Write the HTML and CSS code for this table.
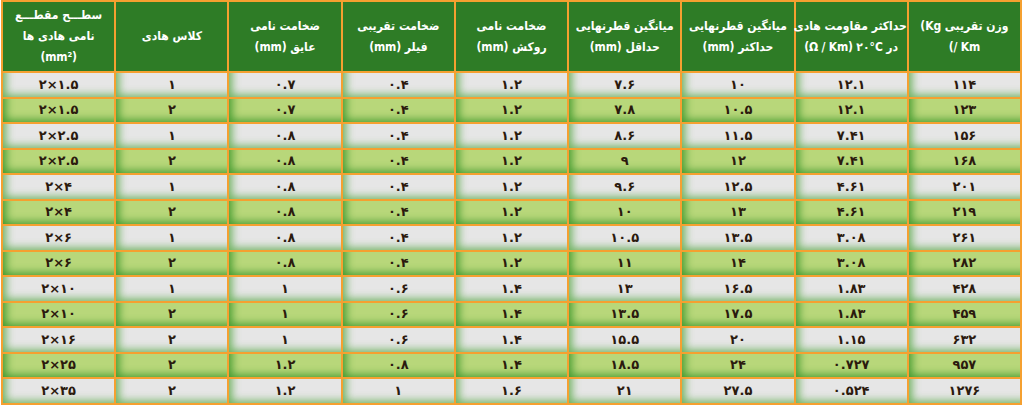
FILE: index.html
```html
<!DOCTYPE html>
<html lang="fa" dir="rtl">
<head>
<meta charset="utf-8">
<title>جدول مشخصات کابل</title>
<link rel="stylesheet" href="styles.css">
</head>
<body>
<table class="spec">
<thead>
<tr>
<th>وزن تقریبی <span class="ltr">(Kg</span><br><span class="ltr">(/ Km</span></th>
<th>حداکثر مقاومت هادی<br>در <span class="ltr">۲۰°C</span> <span class="ltr">(Ω / Km)</span></th>
<th>میانگین قطرنهایی<br>حداکثر <span class="ltr">(mm)</span></th>
<th>میانگین قطرنهایی<br>حداقل <span class="ltr">(mm)</span></th>
<th>ضخامت نامی<br>روکش <span class="ltr">(mm)</span></th>
<th>ضخامت تقریبی<br>فیلر <span class="ltr">(mm)</span></th>
<th>ضخامت نامی<br>عایق <span class="ltr">(mm)</span></th>
<th>کلاس هادی</th>
<th>سطـــح مقطـــع<br>نامی هادی ها<br><span class="ltr">(mm²)</span></th>
</tr>
</thead>
<tbody>
<tr class="odd"><td>۱۱۴</td><td>۱۲.۱</td><td>۱۰</td><td>۷.۶</td><td>۱.۲</td><td>۰.۴</td><td>۰.۷</td><td>۱</td><td>۲×۱.۵</td></tr>
<tr class="even"><td>۱۲۳</td><td>۱۲.۱</td><td>۱۰.۵</td><td>۷.۸</td><td>۱.۲</td><td>۰.۴</td><td>۰.۷</td><td>۲</td><td>۲×۱.۵</td></tr>
<tr class="odd"><td>۱۵۶</td><td>۷.۴۱</td><td>۱۱.۵</td><td>۸.۶</td><td>۱.۲</td><td>۰.۴</td><td>۰.۸</td><td>۱</td><td>۲×۲.۵</td></tr>
<tr class="even"><td>۱۶۸</td><td>۷.۴۱</td><td>۱۲</td><td>۹</td><td>۱.۲</td><td>۰.۴</td><td>۰.۸</td><td>۲</td><td>۲×۲.۵</td></tr>
<tr class="odd"><td>۲۰۱</td><td>۴.۶۱</td><td>۱۲.۵</td><td>۹.۶</td><td>۱.۲</td><td>۰.۴</td><td>۰.۸</td><td>۱</td><td>۲×۴</td></tr>
<tr class="even"><td>۲۱۹</td><td>۴.۶۱</td><td>۱۳</td><td>۱۰</td><td>۱.۲</td><td>۰.۴</td><td>۰.۸</td><td>۲</td><td>۲×۴</td></tr>
<tr class="odd"><td>۲۶۱</td><td>۳.۰۸</td><td>۱۳.۵</td><td>۱۰.۵</td><td>۱.۲</td><td>۰.۴</td><td>۰.۸</td><td>۱</td><td>۲×۶</td></tr>
<tr class="even"><td>۲۸۲</td><td>۳.۰۸</td><td>۱۴</td><td>۱۱</td><td>۱.۲</td><td>۰.۴</td><td>۰.۸</td><td>۲</td><td>۲×۶</td></tr>
<tr class="odd"><td>۴۲۸</td><td>۱.۸۳</td><td>۱۶.۵</td><td>۱۳</td><td>۱.۴</td><td>۰.۶</td><td>۱</td><td>۱</td><td>۲×۱۰</td></tr>
<tr class="even"><td>۴۵۹</td><td>۱.۸۳</td><td>۱۷.۵</td><td>۱۳.۵</td><td>۱.۴</td><td>۰.۶</td><td>۱</td><td>۲</td><td>۲×۱۰</td></tr>
<tr class="odd"><td>۶۳۲</td><td>۱.۱۵</td><td>۲۰</td><td>۱۵.۵</td><td>۱.۴</td><td>۰.۶</td><td>۱</td><td>۲</td><td>۲×۱۶</td></tr>
<tr class="even"><td>۹۵۷</td><td>۰.۷۲۷</td><td>۲۴</td><td>۱۸.۵</td><td>۱.۴</td><td>۰.۸</td><td>۱.۲</td><td>۲</td><td>۲×۲۵</td></tr>
<tr class="odd"><td>۱۲۷۶</td><td>۰.۵۲۴</td><td>۲۷.۵</td><td>۲۱</td><td>۱.۶</td><td>۱</td><td>۱.۲</td><td>۲</td><td>۲×۳۵</td></tr>
</tbody>
</table>
</body>
</html>
```
FILE: styles.css
```css
html, body {
  margin: 0;
  padding: 0;
  background: #ffffff;
}

body {
  padding: 0 2px 0 1px;
  font-family: "DejaVu Sans", sans-serif;
}

.spec {
  width: 1021px;
  border-collapse: collapse;
  table-layout: fixed;
}

.spec th,
.spec td {
  border: 2px solid #f5a030;
  text-align: center;
  vertical-align: middle;
  padding: 0;
  white-space: nowrap;
}

.spec th {
  height: 69px;
  background: #2e7c26;
  color: #ffffff;
  font-family: "DejaVu Sans Condensed", "DejaVu Sans", sans-serif;
  font-size: 12px;
  font-weight: bold;
  line-height: 21px;
  letter-spacing: -0.2px;
}

.ltr {
  direction: ltr;
  unicode-bidi: isolate;
}

.spec td {
  height: 23.5px;
  font-size: 13px;
  font-weight: bold;
  color: #2b1a0e;
  direction: ltr;
  line-height: 16px;
}

.spec tr.odd td {
  background: #e6e6e6;
  box-shadow: inset 7px -6px 8px -4px rgba(70, 160, 50, 0.75);
}

.spec tr.even td {
  background: #b8d77a;
  box-shadow: inset 7px -6px 8px -4px rgba(40, 140, 30, 0.8);
}
```
